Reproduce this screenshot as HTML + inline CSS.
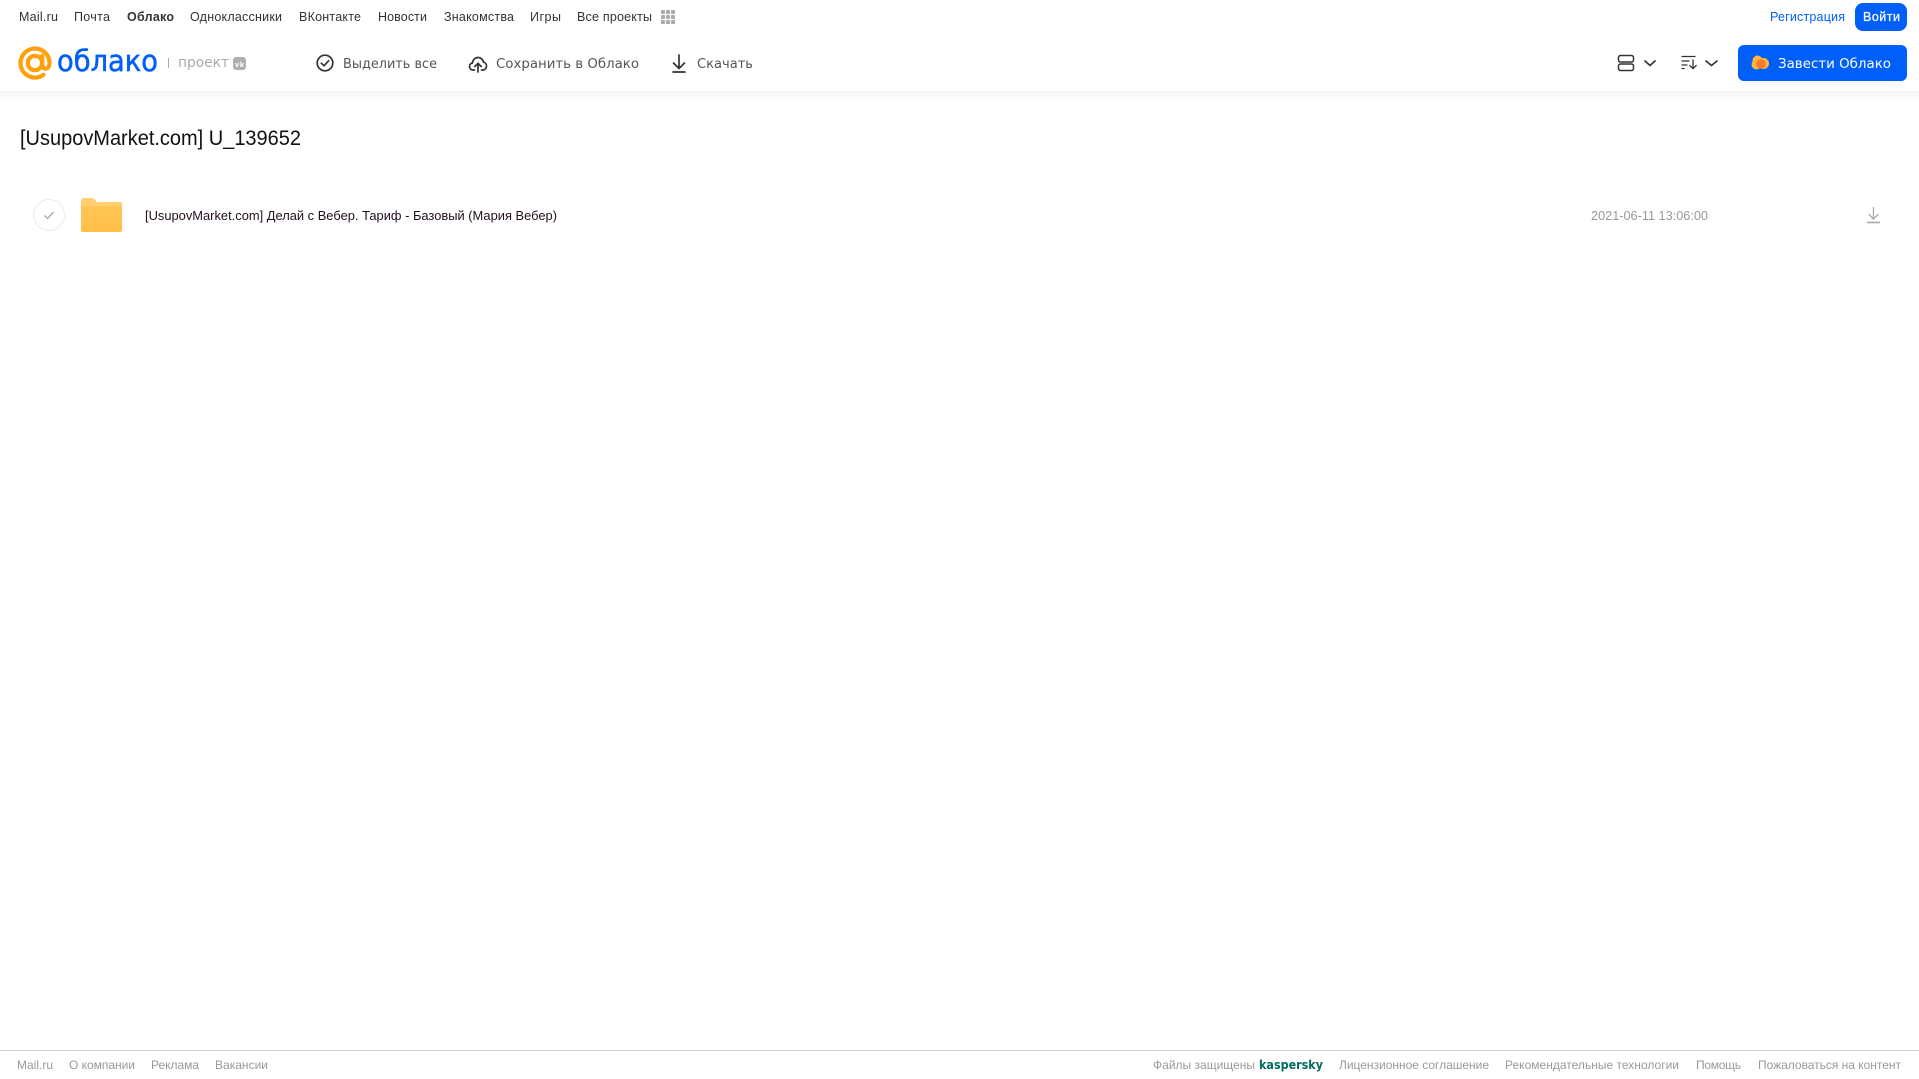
<!DOCTYPE html>
<html lang="ru"><head><meta charset="utf-8"><title>Облако</title>
<style>
html,body{margin:0;padding:0;background:#fff;width:1919px;height:1079px;overflow:hidden}
svg{display:block;position:absolute;left:0;top:0}
text{font-family:"Liberation Sans",Arial,sans-serif;white-space:pre}
.n{font-size:12.5px;fill:#333}
.t{font-family:"DejaVu Sans","Liberation Sans",sans-serif;font-size:13px;fill:#555}
.f{font-size:12px;fill:#999}
</style></head><body>
<svg width="1919" height="1079" viewBox="0 0 1919 1079" xmlns="http://www.w3.org/2000/svg">
<defs>
<linearGradient id="s" x1="0" y1="0" x2="0" y2="1"><stop offset="0" stop-color="#f4f4f4"/><stop offset="1" stop-color="#fff"/></linearGradient>
<linearGradient id="fo" x1="0" y1="0" x2="0" y2="1"><stop offset="0" stop-color="#ffc655"/><stop offset="1" stop-color="#ffbf47"/></linearGradient>
</defs>
<rect x="0" y="91" width="1919" height="10" fill="url(#s)"/>

<!-- top nav -->
<text class="n" x="19" y="21" textLength="39">Mail.ru</text>
<text class="n" x="74" y="21" textLength="36">Почта</text>
<text class="n" x="127" y="21" textLength="47" style="font-weight:700">Облако</text>
<text class="n" x="190" y="21" textLength="92">Одноклассники</text>
<text class="n" x="299" y="21" textLength="62">ВКонтакте</text>
<text class="n" x="378" y="21" textLength="49">Новости</text>
<text class="n" x="444" y="21" textLength="70">Знакомства</text>
<text class="n" x="530" y="21" textLength="31">Игры</text>
<text class="n" x="577" y="21" textLength="75">Все проекты</text>
<g fill="#aaa">
<rect x="661" y="10" width="4" height="4" rx="1"/><rect x="666" y="10" width="4" height="4" rx="1"/><rect x="671" y="10" width="4" height="4" rx="1"/>
<rect x="661" y="15" width="4" height="4" rx="1"/><rect x="666" y="15" width="4" height="4" rx="1"/><rect x="671" y="15" width="4" height="4" rx="1"/>
<rect x="661" y="20" width="4" height="4" rx="1"/><rect x="666" y="20" width="4" height="4" rx="1"/><rect x="671" y="20" width="4" height="4" rx="1"/>
</g>

<text x="1770" y="21" textLength="75" style="font-size:12.5px;fill:#005ff9">Регистрация</text>
<rect x="1855" y="3" width="52" height="28" rx="8" fill="#005ff9"/>
<text x="1863" y="21" textLength="37" style="font-size:12.5px;fill:#fff;stroke:#fff;stroke-width:.25">Войти</text>

<!-- logo -->
<g fill="none" stroke="#ffa009" stroke-width="4.2" stroke-linecap="round">
<circle cx="35" cy="63" r="7.2"/>
<path d="M42.200 56v8.500c0 6 7.300 5.500 7.300-1.500a14.500 14.500 0 1 0-6 11.800"/>
</g>
<text x="57" y="71" textLength="101" lengthAdjust="spacingAndGlyphs" style="font-family:'DejaVu Sans',sans-serif;font-size:29px;fill:#005ff9;stroke:#005ff9;stroke-width:.5">облако</text>
<rect x="168" y="58" width="1" height="10" fill="#aaa"/>
<text x="178" y="67" textLength="51" lengthAdjust="spacingAndGlyphs" style="font-family:'DejaVu Sans',sans-serif;font-size:14px;fill:#aaa">проект</text>
<rect x="233" y="57" width="13" height="13" rx="3" fill="#b0b0b0"/>
<text x="235" y="67" textLength="9" style="font-size:7.5px;fill:#fff;font-weight:700">vk</text>

<!-- toolbar -->
<g fill="none" stroke="#333" stroke-width="1.700" stroke-linecap="round" stroke-linejoin="round">
<circle cx="325" cy="63" r="7.800"/>
<path d="M321.300 63.200l2.700 2.600 4.600-5"/>
<path d="M474.500 70h-1.500c-2.200 0-3.500-1.700-3.500-3.500 0-1.800 1.200-3.200 2.900-3.500.4-3.200 2.700-5.500 5.600-5.500 2.800 0 5 1.900 5.500 4.700 1.800.2 3 1.900 3 3.800 0 2.200-1.500 4-3.600 4h-1.400"/>
<path d="M478 72V63.500M474.800 66.500l3.200-3.200 3.200 3.200"/>
<path d="M679 55v13M673.500 63l5.500 5.500 5.500-5.500M673 72h12"/>
</g>
<text class="t" x="343" y="68" textLength="94" lengthAdjust="spacingAndGlyphs">Выделить все</text>
<text class="t" x="496" y="68" textLength="143" lengthAdjust="spacingAndGlyphs">Сохранить в Облако</text>
<text class="t" x="697" y="68" textLength="56" lengthAdjust="spacingAndGlyphs">Скачать</text>

<!-- right tools -->
<g fill="none" stroke="#333" stroke-width="1.500" stroke-linecap="round" stroke-linejoin="round">
<rect x="1618.500" y="55.500" width="15" height="6.500" rx="2"/>
<rect x="1618.500" y="64" width="15" height="6.500" rx="2"/>
<path d="M1645 61l5 4.500 5-4.500" stroke-width="1.700"/>
<path d="M1706 61l5.500 4.500 5.500-4.500" stroke-width="1.700"/>
<path d="M1682 56.500h13M1682 61h7M1682 65h5M1682 68.500h2M1693 60v8.500M1689.800 65.500l3.200 3.200 3.200-3.200" stroke-width="1.300"/>
</g>
<rect x="1738" y="45" width="169" height="36" rx="6" fill="#005ff9"/>
<circle cx="1756.500" cy="64.500" r="5" fill="#ffb53d"/>
<circle cx="1757.500" cy="60.500" r="5" fill="#ffb53d"/>
<circle cx="1763.500" cy="63.500" r="5.500" fill="#ffb53d"/>
<circle cx="1761" cy="64" r="4.800" fill="#f7792b"/>
<text x="1778" y="68" textLength="113" lengthAdjust="spacingAndGlyphs" style="font-family:'DejaVu Sans',sans-serif;font-size:13px;fill:#fff">Завести Облако</text>

<!-- title -->
<text x="20" y="145" textLength="281" lengthAdjust="spacingAndGlyphs" style="font-size:21px;fill:#111">[UsupovMarket.com] U_139652</text>

<!-- row -->
<circle cx="49" cy="215" r="15.500" fill="#fff" stroke="#ececec" stroke-width="1"/>
<path d="M44.500 215.500l3 3 6-6.500" fill="none" stroke="#aaa" stroke-width="1.400"/>
<path d="M81 201a3 3 0 0 1 3-3h7c2.500 0 3.500 1 5 3l1 1h23a2 2 0 0 1 2 2v4H81z" fill="#ffcf70"/>
<path d="M81 206h41v24a2 2 0 0 1-2 2H83a2 2 0 0 1-2-2z" fill="url(#fo)"/>
<text x="145" y="220" textLength="412" lengthAdjust="spacingAndGlyphs" style="font-size:13px;fill:#201020">[UsupovMarket.com] Делай с Вебер. Тариф - Базовый (Мария Вебер)</text>
<text x="1591" y="220" textLength="117" lengthAdjust="spacingAndGlyphs" style="font-size:12.500px;fill:#999">2021-06-11 13:06:00</text>
<g fill="none" stroke="#aaa" stroke-width="1.300">
<path d="M1873.500 207v12M1868.500 214l5 5 5-5"/>
<path d="M1867 222.500h13" stroke-width="1.600"/>
</g>

<!-- footer -->
<rect x="0" y="1050" width="1919" height="1" fill="#d4d4d4"/>
<text class="f" x="17" y="1069" textLength="36">Mail.ru</text>
<text class="f" x="69" y="1069" textLength="66">О компании</text>
<text class="f" x="151" y="1069" textLength="48">Реклама</text>
<text class="f" x="215" y="1069" textLength="53">Вакансии</text>
<text class="f" x="1153" y="1069" textLength="102">Файлы защищены</text>
<text x="1259" y="1069" textLength="64" lengthAdjust="spacingAndGlyphs" style="font-family:'DejaVu Sans',sans-serif;font-size:12px;font-weight:700;fill:#006d5c">kaspersky</text>
<text class="f" x="1339" y="1069" textLength="150">Лицензионное соглашение</text>
<text class="f" x="1505" y="1069" textLength="174">Рекомендательные технологии</text>
<text class="f" x="1696" y="1069" textLength="45">Помощь</text>
<text class="f" x="1758" y="1069" textLength="143">Пожаловаться на контент</text>
</svg>
</body></html>
